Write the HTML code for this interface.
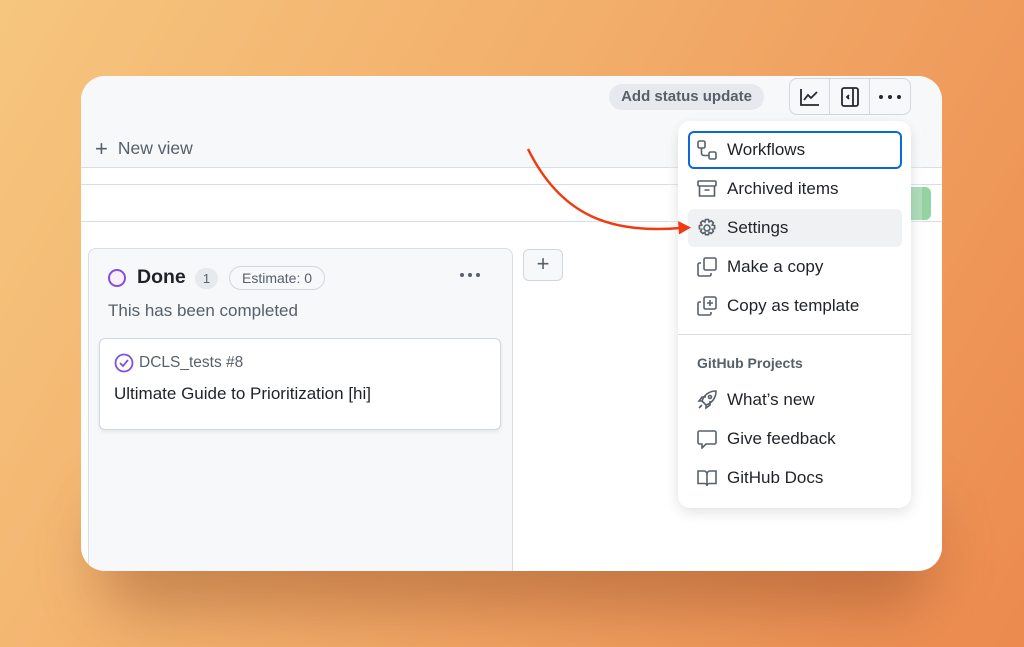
<!DOCTYPE html>
<html><head><style>
*{margin:0;padding:0;box-sizing:border-box}
body{width:1024px;height:647px;overflow:hidden;font-family:"Liberation Sans",sans-serif;background:linear-gradient(120deg,#f6c67e 0%,#f2ad6a 45%,#ec8a4f 100%);position:relative}
.shadow{position:absolute;left:100px;top:500px;width:830px;height:110px;border-radius:40px;background:rgba(120,50,20,.35);filter:blur(30px)}
.card{position:absolute;left:81px;top:76px;width:861px;height:495px;border-radius:24px;background:#fff;overflow:hidden}
.top{position:absolute;left:0;top:0;width:100%;height:92px;background:#f6f8fa;border-bottom:1px solid #d8dee4}
.abs{position:absolute}
.item{position:absolute;left:10px;width:214px;height:38px;display:flex;align-items:center;font-size:17px;color:#1f2328;padding-left:9px}
.item svg{margin-right:10px}
</style></head><body>
<div class="shadow"></div>
<div class="card">
 <div class="top"></div>
 <div class="abs" style="left:528px;top:8px;width:155px;height:26px;border-radius:13px;background:#e6e9ed;color:#57606a;font-size:15px;font-weight:bold;line-height:26px;text-align:center">Add status update</div>
 <div class="abs" style="left:708px;top:2px;width:122px;height:37px;border:1px solid #d0d7de;border-radius:8px;background:#f6f8fa;display:flex">
  <div style="width:40px;border-right:1px solid #d0d7de;display:flex;align-items:center;justify-content:center"><svg width="20" height="18" viewBox="0 0 20 18" fill="none" stroke="#24292f" stroke-width="1.8"><path d="M1 1v16h18"/><path d="M4 12l4-5 3 3 6-6"/></svg></div>
  <div style="width:40px;border-right:1px solid #d0d7de;display:flex;align-items:center;justify-content:center"><svg width="18" height="20" viewBox="0 0 18 20" fill="none" stroke="#24292f" stroke-width="1.8"><rect x="1" y="1" width="16" height="18" rx="2"/><path d="M12 1v18"/><path d="M8 8l-2 2 2 2" fill="#24292f"/></svg></div>
  <div style="flex:1;display:flex;align-items:center;justify-content:center;gap:5px"><i style="width:4px;height:4px;border-radius:2px;background:#24292f"></i><i style="width:4px;height:4px;border-radius:2px;background:#24292f"></i><i style="width:4px;height:4px;border-radius:2px;background:#24292f"></i></div>
 </div>
 <div class="abs" style="left:14px;top:60px;font-size:17.5px;color:#57606a"><span style="font-size:22px;vertical-align:-2px;margin-right:10px">+</span>New view</div>
 <div class="abs" style="left:0;top:108px;width:100%;height:38px;background:#fff;border-top:1px solid #d8dee4;border-bottom:1px solid #d8dee4"></div>
 <div class="abs" style="left:820px;top:111px;width:30px;height:33px;background:#94d3a2;border-radius:6px"></div>
 <div class="abs" style="left:7px;top:172px;width:425px;height:330px;background:#f6f8fa;border:1px solid #d8dee4;border-radius:8px"></div>
 <div class="abs" style="left:442px;top:173px;width:40px;height:32px;border:1px solid #d0d7de;border-radius:6px;background:#f6f8fa;text-align:center;font-size:22px;line-height:28px;color:#57606a">+</div>
 <div class="abs" style="left:27px;top:193px;width:18px;height:18px;border:2.5px solid #8250df;border-radius:50%;background:#fbefff"></div>
 <div class="abs" style="left:56px;top:190px;font-size:19.5px;font-weight:bold;color:#1f2328">Done</div>
 <div class="abs" style="left:114px;top:192px;width:23px;height:21px;border-radius:11px;background:#e6e9ed;font-size:13px;color:#57606a;text-align:center;line-height:21px">1</div>
 <div class="abs" style="left:148px;top:190px;width:96px;height:24px;border:1px solid #d0d7de;border-radius:12px;font-size:14px;color:#57606a;text-align:center;line-height:22px">Estimate: 0</div>
 <div class="abs" style="left:379px;top:197px;display:flex;gap:4px"><i style="width:4px;height:4px;border-radius:2px;background:#57606a"></i><i style="width:4px;height:4px;border-radius:2px;background:#57606a"></i><i style="width:4px;height:4px;border-radius:2px;background:#57606a"></i></div>
 <div class="abs" style="left:27px;top:225px;font-size:17px;color:#57606a">This has been completed</div>
 <div class="abs" style="left:18px;top:262px;width:402px;height:92px;background:#fff;border:1px solid #d0d7de;border-radius:6px;box-shadow:0 2px 4px rgba(0,0,0,.08)"></div>
 <svg class="abs" style="left:33px;top:277px" width="20" height="20" viewBox="0 0 20 20" fill="none" stroke="#8250df" stroke-width="1.8"><circle cx="10" cy="10" r="8.5"/><path d="M6 10l3 3 5-6"/></svg>
 <div class="abs" style="left:58px;top:278px;font-size:15.5px;color:#57606a">DCLS_tests #8</div>
 <div class="abs" style="left:33px;top:308px;font-size:17px;color:#1f2328">Ultimate Guide to Prioritization [hi]</div>
</div>
<div class="abs" style="left:668px;top:115px;width:254px;height:410px;border-radius:18px;background:rgba(255,255,255,.25)"></div>
<div class="abs" style="left:678px;top:121px;width:233px;height:387px;background:#fff;border-radius:12px;box-shadow:0 4px 14px rgba(0,0,0,.12)">
 <div class="item" style="top:10px;border:2px solid #0969da;border-radius:6px;padding-left:7px"><svg width="20" height="20" viewBox="0 0 20 20" fill="none" stroke="#57606a" stroke-width="1.6"><rect x="1" y="1" width="7" height="7" rx="1.5"/><rect x="12" y="12" width="7" height="7" rx="1.5"/><path d="M4.5 8v5a2.5 2.5 0 0 0 2.5 2.5h5"/></svg>Workflows</div>
 <div class="item" style="top:49px"><svg width="20" height="20" viewBox="0 0 20 20" fill="none" stroke="#57606a" stroke-width="1.6"><rect x="1" y="2" width="18" height="5" rx="1"/><path d="M2.5 7v10h15V7M7.5 11h5"/></svg>Archived items</div>
 <div class="item" style="top:88px;background:#eff1f3;border-radius:6px"><svg width="20" height="20" viewBox="0 0 20 20" fill="none" stroke="#57606a" stroke-width="1.6"><circle cx="10" cy="10" r="3"/><path d="M8.5 1.5h3l.6 2.4 2.2-1.2 2.1 2.1-1.2 2.2 2.4.6v3l-2.4.6 1.2 2.2-2.1 2.1-2.2-1.2-.6 2.4h-3l-.6-2.4-2.2 1.2-2.1-2.1 1.2-2.2-2.4-.6v-3l2.4-.6-1.2-2.2 2.1-2.1 2.2 1.2z"/></svg>Settings</div>
 <div class="item" style="top:127px"><svg width="20" height="20" viewBox="0 0 20 20" fill="none" stroke="#57606a" stroke-width="1.6"><rect x="7" y="1" width="12" height="12" rx="1.5"/><path d="M4 6H2.5A1.5 1.5 0 0 0 1 7.5v10A1.5 1.5 0 0 0 2.5 19h10a1.5 1.5 0 0 0 1.5-1.5V16"/></svg>Make a copy</div>
 <div class="item" style="top:166px"><svg width="20" height="20" viewBox="0 0 20 20" fill="none" stroke="#57606a" stroke-width="1.6"><rect x="7" y="1" width="12" height="12" rx="1.5"/><path d="M4 6H2.5A1.5 1.5 0 0 0 1 7.5v10A1.5 1.5 0 0 0 2.5 19h10a1.5 1.5 0 0 0 1.5-1.5V16M13 4v6M10 7h6"/></svg>Copy as template</div>
 <div class="abs" style="left:0;top:213px;width:100%;border-top:1px solid #d8dee4"></div>
 <div class="abs" style="left:19px;top:234px;font-size:14px;font-weight:bold;color:#57606a">GitHub Projects</div>
 <div class="item" style="top:260px"><svg width="20" height="20" viewBox="0 0 20 20" fill="none" stroke="#57606a" stroke-width="1.6"><path d="M7 13l-2-2C7 5 12 1 19 1c0 7-4 12-10 14zM5 11H2l3-4h4M9 15v3l4-3v-4M2 18l3-3"/><circle cx="13" cy="7" r="1.5"/></svg>What’s new</div>
 <div class="item" style="top:299px"><svg width="20" height="20" viewBox="0 0 20 20" fill="none" stroke="#57606a" stroke-width="1.6"><path d="M2.5 2h15A1.5 1.5 0 0 1 19 3.5v10a1.5 1.5 0 0 1-1.5 1.5H9l-4 4v-4H2.5A1.5 1.5 0 0 1 1 13.5v-10A1.5 1.5 0 0 1 2.5 2z"/></svg>Give feedback</div>
 <div class="item" style="top:338px"><svg width="20" height="20" viewBox="0 0 20 20" fill="none" stroke="#57606a" stroke-width="1.6"><path d="M1 3h6a3 3 0 0 1 3 3v12a2.5 2.5 0 0 0-2.5-2.5H1zM19 3h-6a3 3 0 0 0-3 3v12a2.5 2.5 0 0 1 2.5-2.5H19z"/></svg>GitHub Docs</div>
</div>
<svg class="abs" style="left:521px;top:146px" width="180" height="100" viewBox="0 0 180 100" fill="none"><path d="M7 3C40 70 90 88 160 82" stroke="#f23a12" stroke-width="2.5"/><path d="M157 75l13 6.5-12 7z" fill="#f23a12"/></svg>
</body></html>
